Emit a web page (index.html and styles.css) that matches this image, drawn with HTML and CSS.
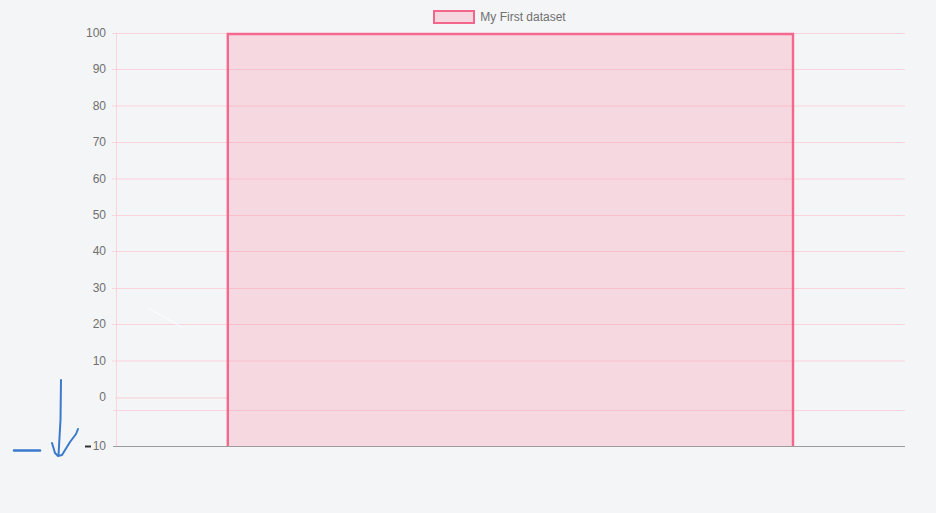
FILE: index.html
```html
<!DOCTYPE html>
<html lang="en">
<head>
<meta charset="utf-8">
<title>Bar chart</title>
<link rel="stylesheet" href="styles.css">
</head>
<body>
<main class="page">
  <div class="legend">
    <span class="legend-box"></span>
    <span class="legend-label">My First dataset</span>
  </div>
  <svg class="chart" viewBox="0 24 936 489" role="img" aria-label="Bar chart">
    <g class="grid">
      <path d="M112 33.5H905M112 69.5H905M112 106H905M112 142.5H905M112 179H905M112 215.5H905M112 251.5H905M112 288.5H905M112 324.5H905M112 361H905M113 410.5H905"/>
      <path d="M116.5 33V446"/>
    </g>
    <path class="zero-line" d="M115 398H227"/>
    <path class="baseline" d="M113 446.5H905"/>
    <path class="scratch" d="M148 308L166 318L183 328"/>
    <rect class="bar-fill" x="228" y="34" width="565" height="412"/>
    <path class="bar-edge" d="M227.8 446V34H793V446"/>
    <g class="ticks">
      <text x="106" y="37">100</text>
      <text x="106" y="73">90</text>
      <text x="106" y="110">80</text>
      <text x="106" y="146">70</text>
      <text x="106" y="183">60</text>
      <text x="106" y="219">50</text>
      <text x="106" y="255">40</text>
      <text x="106" y="292">30</text>
      <text x="106" y="328">20</text>
      <text x="106" y="365">10</text>
      <text x="106" y="401">0</text>
      <text x="106" y="450">10</text>
    </g>
    <path class="minus" d="M85 446.5H91"/>
    <g class="pen">
      <path class="pen-dash" d="M14 450.5H40"/>
      <path d="M61 380L60.5 420L58.5 455"/>
      <path d="M52 443L55 453L58 456L62 455L70 442L76 434L78 429"/>
    </g>
  </svg>
</main>
</body>
</html>
```
FILE: styles.css
```css
html, body {
  margin: 0;
  padding: 0;
  background: #f4f5f7;
}
.page {
  display: flex;
  flex-direction: column;
  width: 936px;
  height: 513px;
  overflow: hidden;
  font-family: "Liberation Sans", Arial, sans-serif;
}
.legend {
  display: flex;
  justify-content: center;
  align-items: flex-start;
  gap: 5px;
  height: 24px;
  padding: 10px 0 0 63px;
  box-sizing: border-box;
  flex: none;
  color: #707070;
  font-size: 12px;
  line-height: 14px;
}
.legend-box {
  width: 38px;
  height: 10px;
  border: 2px solid #f2668b;
  background: #f6d6df;
}
.chart {
  display: block;
  width: 936px;
  height: 489px;
  flex: none;
}
.grid path {
  fill: none;
  stroke: #fbd3dc;
  stroke-width: 1;
}
.zero-line {
  fill: none;
  stroke: #f5e0e4;
  stroke-width: 2;
}
.baseline {
  fill: none;
  stroke: #9c9c9c;
  stroke-width: 1;
}
.scratch {
  fill: none;
  stroke: #ffffff;
  stroke-width: 1.2;
  opacity: 0.7;
}
.bar-fill {
  fill: rgba(250, 130, 155, 0.25);
}
.bar-edge {
  fill: none;
  stroke: #f4688e;
  stroke-width: 2.4;
}
.ticks text {
  fill: #707070;
  font-size: 12px;
  text-anchor: end;
}
.minus {
  fill: none;
  stroke: #333;
  stroke-width: 2;
}
.pen path {
  fill: none;
  stroke: #3b7acb;
  stroke-width: 2;
  stroke-linecap: round;
  stroke-linejoin: round;
}
.pen .pen-dash {
  stroke-width: 2.5;
}
```
